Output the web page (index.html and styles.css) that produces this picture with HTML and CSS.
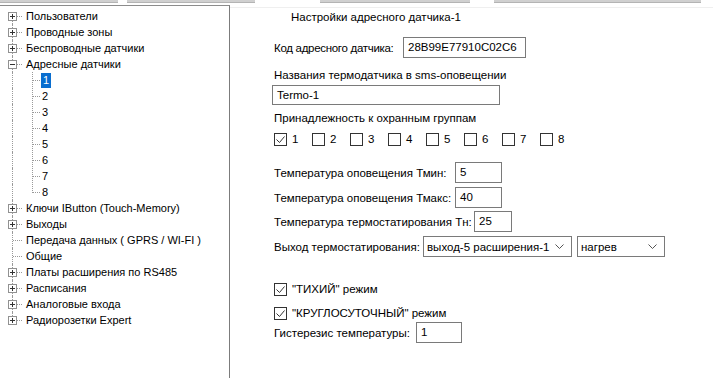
FILE: index.html
```html
<!DOCTYPE html>
<html lang="ru">
<head>
<meta charset="utf-8">
<link rel="stylesheet" href="styles.css">
</head>
<body>
<div class="topstrip">
  <span class="tb tb1"></span><span class="tb tb2"></span><span class="tb tb3"></span><span class="tb tb4"></span>
</div>
<div class="main">
  <div class="tree">
    <div class="row root first"><span class="gut"><svg class="pm" width="9" height="9" viewBox="0 0 9 9"><rect x="0.5" y="0.5" width="8" height="8" fill="#fff" stroke="#919191"/><path d="M2 4.5h5M4.5 2v5" stroke="#333"/></svg></span><span class="lbl">Пользователи</span></div>
    <div class="row root"><span class="gut"><svg class="pm" width="9" height="9" viewBox="0 0 9 9"><rect x="0.5" y="0.5" width="8" height="8" fill="#fff" stroke="#919191"/><path d="M2 4.5h5M4.5 2v5" stroke="#333"/></svg></span><span class="lbl">Проводные зоны</span></div>
    <div class="row root"><span class="gut"><svg class="pm" width="9" height="9" viewBox="0 0 9 9"><rect x="0.5" y="0.5" width="8" height="8" fill="#fff" stroke="#919191"/><path d="M2 4.5h5M4.5 2v5" stroke="#333"/></svg></span><span class="lbl">Беспроводные датчики</span></div>
    <div class="row root"><span class="gut"><svg class="pm" width="9" height="9" viewBox="0 0 9 9"><rect x="0.5" y="0.5" width="8" height="8" fill="#fff" stroke="#919191"/><path d="M2 4.5h5" stroke="#333"/></svg></span><span class="lbl">Адресные датчики</span></div>
    <div class="row child"><span class="gut cgut"></span><span class="lbl sel">1</span></div>
    <div class="row child"><span class="gut cgut"></span><span class="lbl">2</span></div>
    <div class="row child"><span class="gut cgut"></span><span class="lbl">3</span></div>
    <div class="row child"><span class="gut cgut"></span><span class="lbl">4</span></div>
    <div class="row child"><span class="gut cgut"></span><span class="lbl">5</span></div>
    <div class="row child"><span class="gut cgut"></span><span class="lbl">6</span></div>
    <div class="row child"><span class="gut cgut"></span><span class="lbl">7</span></div>
    <div class="row child clast"><span class="gut cgut"></span><span class="lbl">8</span></div>
    <div class="row root"><span class="gut"><svg class="pm" width="9" height="9" viewBox="0 0 9 9"><rect x="0.5" y="0.5" width="8" height="8" fill="#fff" stroke="#919191"/><path d="M2 4.5h5M4.5 2v5" stroke="#333"/></svg></span><span class="lbl">Ключи IButton (Touch-Memory)</span></div>
    <div class="row root"><span class="gut"><svg class="pm" width="9" height="9" viewBox="0 0 9 9"><rect x="0.5" y="0.5" width="8" height="8" fill="#fff" stroke="#919191"/><path d="M2 4.5h5M4.5 2v5" stroke="#333"/></svg></span><span class="lbl">Выходы</span></div>
    <div class="row root"><span class="gut"></span><span class="lbl">Передача данных ( GPRS / WI-FI )</span></div>
    <div class="row root"><span class="gut"></span><span class="lbl">Общие</span></div>
    <div class="row root"><span class="gut"><svg class="pm" width="9" height="9" viewBox="0 0 9 9"><rect x="0.5" y="0.5" width="8" height="8" fill="#fff" stroke="#919191"/><path d="M2 4.5h5M4.5 2v5" stroke="#333"/></svg></span><span class="lbl">Платы расширения по RS485</span></div>
    <div class="row root"><span class="gut"><svg class="pm" width="9" height="9" viewBox="0 0 9 9"><rect x="0.5" y="0.5" width="8" height="8" fill="#fff" stroke="#919191"/><path d="M2 4.5h5M4.5 2v5" stroke="#333"/></svg></span><span class="lbl">Расписания</span></div>
    <div class="row root"><span class="gut"><svg class="pm" width="9" height="9" viewBox="0 0 9 9"><rect x="0.5" y="0.5" width="8" height="8" fill="#fff" stroke="#919191"/><path d="M2 4.5h5M4.5 2v5" stroke="#333"/></svg></span><span class="lbl">Аналоговые входа</span></div>
    <div class="row root last"><span class="gut"><svg class="pm" width="9" height="9" viewBox="0 0 9 9"><rect x="0.5" y="0.5" width="8" height="8" fill="#fff" stroke="#919191"/><path d="M2 4.5h5M4.5 2v5" stroke="#333"/></svg></span><span class="lbl">Радиорозетки Expert</span></div>
  </div>

  <div class="form">
    <div class="title">Настройки адресного датчика-1</div>

    <div class="frow r-code"><span class="flabel w-code">Код адресного датчика:</span><span class="inp i-code">28B99E77910C02C6</span></div>

    <div class="plabel r-smsl">Названия термодатчика в sms-оповещении</div>
    <div class="inp i-sms r-smsi">Termo-1</div>

    <div class="plabel r-grpl">Принадлежность к охранным группам</div>
    <div class="groups">
      <span class="cb"><svg class="box" width="13" height="13" viewBox="0 0 13 13"><rect x="0.5" y="0.5" width="12" height="12" fill="#fff" stroke="#333"/><path d="M2.5 6.5l3 3 5-6" fill="none" stroke="#333"/></svg>1</span>
      <span class="cb"><svg class="box" width="13" height="13" viewBox="0 0 13 13"><rect x="0.5" y="0.5" width="12" height="12" fill="#fff" stroke="#333"/></svg>2</span>
      <span class="cb"><svg class="box" width="13" height="13" viewBox="0 0 13 13"><rect x="0.5" y="0.5" width="12" height="12" fill="#fff" stroke="#333"/></svg>3</span>
      <span class="cb"><svg class="box" width="13" height="13" viewBox="0 0 13 13"><rect x="0.5" y="0.5" width="12" height="12" fill="#fff" stroke="#333"/></svg>4</span>
      <span class="cb"><svg class="box" width="13" height="13" viewBox="0 0 13 13"><rect x="0.5" y="0.5" width="12" height="12" fill="#fff" stroke="#333"/></svg>5</span>
      <span class="cb"><svg class="box" width="13" height="13" viewBox="0 0 13 13"><rect x="0.5" y="0.5" width="12" height="12" fill="#fff" stroke="#333"/></svg>6</span>
      <span class="cb"><svg class="box" width="13" height="13" viewBox="0 0 13 13"><rect x="0.5" y="0.5" width="12" height="12" fill="#fff" stroke="#333"/></svg>7</span>
      <span class="cb"><svg class="box" width="13" height="13" viewBox="0 0 13 13"><rect x="0.5" y="0.5" width="12" height="12" fill="#fff" stroke="#333"/></svg>8</span>
    </div>

    <div class="frow r-tmin"><span class="flabel w-tmin">Температура оповещения Тмин:</span><span class="inp i-t">5</span></div>
    <div class="frow r-tmax"><span class="flabel w-tmin">Температура оповещения Тмакс:</span><span class="inp i-t">40</span></div>
    <div class="frow r-tn"><span class="flabel w-tn">Температура термостатирования Тн:</span><span class="inp i-tn">25</span></div>
    <div class="frow r-out"><span class="flabel w-out">Выход термостатирования:</span>
      <span class="combo c1"><span class="ctext">выход-5 расширения-1</span><svg class="chev" width="9" height="5" viewBox="0 0 9 5"><path d="M0.5 0.5l4 4 4-4" fill="none" stroke="#555"/></svg></span>
      <span class="combo c2"><span class="ctext">нагрев</span><svg class="chev" width="9" height="5" viewBox="0 0 9 5"><path d="M0.5 0.5l4 4 4-4" fill="none" stroke="#555"/></svg></span>
    </div>

    <div class="cb crow r-quiet"><svg class="box" width="13" height="13" viewBox="0 0 13 13"><rect x="0.5" y="0.5" width="12" height="12" fill="#fff" stroke="#333"/><path d="M2.5 6.5l3 3 5-6" fill="none" stroke="#333"/></svg>"ТИХИЙ" режим</div>
    <div class="cb crow r-round"><svg class="box" width="13" height="13" viewBox="0 0 13 13"><rect x="0.5" y="0.5" width="12" height="12" fill="#fff" stroke="#333"/><path d="M2.5 6.5l3 3 5-6" fill="none" stroke="#333"/></svg>"КРУГЛОСУТОЧНЫЙ" режим</div>
    <div class="frow r-hyst"><span class="flabel w-hyst">Гистерезис температуры:</span><span class="inp i-hyst">1</span></div>
  </div>
</div>
</body>
</html>
```

FILE: styles.css
```css
html, body {
  margin: 0;
  padding: 0;
  background: #fff;
}
body {
  width: 713px;
  height: 378px;
  overflow: hidden;
  font-family: "Liberation Sans", Arial, sans-serif;
  color: #000;
}

/* top strip: bottoms of buttons above */
.topstrip {
  display: flex;
  height: 5px;
  align-items: flex-start;
}
.tb {
  height: 3px;
  background: #d0d0d0;
  border-bottom: 1px solid #b4b4b4;
  box-sizing: border-box;
}
.tb1 { width: 118px; }
.tb2 { width: 128px; margin-left: 9px; }
.tb3 { width: 150px; margin-left: 65px; }
.tb4 { width: 207px; margin-left: 24px; }

.main {
  display: flex;
  height: 373px;
}

/* tree */
.tree {
  width: 229px;
  flex: none;
  border-top: 1px solid #8c8c8c;
  border-right: 1px solid #7c7c7c;
  padding-top: 2px;
  font-size: 11px;
}
.row {
  display: flex;
  align-items: center;
  height: 16px;
}
.gut {
  position: relative;
  flex: none;
  width: 25px;
  height: 16px;
}
.gut::before {
  content: "";
  position: absolute;
  left: 12px;
  top: 0;
  bottom: 0;
  border-left: 1px dotted #9a9a9a;
}
.gut::after {
  content: "";
  position: absolute;
  left: 13px;
  width: 9px;
  top: 8px;
  border-top: 1px dotted #9a9a9a;
}
.first .gut::before { top: 8px; }
.last .gut::before { bottom: 8px; }
.pm {
  position: absolute;
  left: 8px;
  top: 4px;
  z-index: 1;
}
.cgut { width: 41px; }
.cgut::after {
  left: 33px;
  width: 7px;
}
.child .cgut {
  background-image: linear-gradient(#9a9a9a 50%, transparent 50%);
  background-size: 1px 2px;
  background-repeat: repeat-y;
  background-position: 32px 0;
}
.clast .cgut {
  background-size: 1px 2px;
  background-repeat: no-repeat;
  background-image:
    linear-gradient(#9a9a9a 50%, transparent 50%),
    linear-gradient(#9a9a9a 50%, transparent 50%),
    linear-gradient(#9a9a9a 50%, transparent 50%),
    linear-gradient(#9a9a9a 50%, transparent 50%),
    linear-gradient(#9a9a9a 50%, transparent 50%);
  background-position: 32px 0, 32px 2px, 32px 4px, 32px 6px, 32px 8px;
}
.lbl {
  white-space: nowrap;
  line-height: 14px;
  padding: 0 1px;
}
.lbl.sel {
  background: #0a6ecf;
  color: #fff;
  padding: 0 2px;
  line-height: 15px;
}

/* form */
.form {
  flex: 1;
  border-top: 1px solid #efefef;
  margin-top: 2px;
  padding-left: 44px;
  font-size: 11.5px;
  display: flex;
  flex-direction: column;
  align-items: flex-start;
}
.title {
  margin-left: 17px;
  line-height: 16px;
  margin-top: 1px;
}
.frow {
  display: flex;
  align-items: center;
  height: 21px;
}
.flabel {
  flex: none;
  white-space: nowrap;
}
.plabel {
  line-height: 16px;
}
.inp {
  box-sizing: border-box;
  height: 21px;
  border: 1px solid #7a7a7a;
  background: #fff;
  padding: 0 4px;
  line-height: 19px;
  white-space: nowrap;
}
.w-code { width: 129px; letter-spacing: -0.3px; }
.i-code { width: 123px; }
.r-code { margin-top: 12px; }
.r-smsl { margin-top: 9px; }
.r-smsi { margin-top: 2px; margin-left: -2px; width: 228px; height: 20px; line-height: 18px; }
.r-grpl { margin-top: 5px; }

.groups {
  display: flex;
  margin-top: 5px;
  height: 16px;
  align-items: center;
}
.cb {
  display: flex;
  align-items: center;
  white-space: nowrap;
}
.groups .cb { width: 38px; }
.box {
  flex: none;
  margin-right: 5px;
}

.r-tmin { margin-top: 15px; }
.r-tmax { margin-top: 4px; }
.r-tn { margin-top: 3px; }
.r-out { margin-top: 4px; }
.w-tmin { min-width: 181px; }
.i-t { width: 47px; }
.w-tn { min-width: 200px; }
.i-tn { width: 38px; }
.w-out { min-width: 149px; }

.combo {
  box-sizing: border-box;
  height: 21px;
  border: 1px solid #7a7a7a;
  background: #fff;
  display: flex;
  align-items: center;
  justify-content: space-between;
  padding: 0 7px 0 3px;
  white-space: nowrap;
}
.c1 { width: 149px; }
.c2 { width: 88px; margin-left: 5px; }
.chev { flex: none; }

.crow { height: 16px; }
.r-quiet { margin-top: 24px; }
.r-round { margin-top: 8px; }
.r-hyst { margin-top: 1px; }
.w-hyst { min-width: 142px; }
.i-hyst { width: 46px; }
```
